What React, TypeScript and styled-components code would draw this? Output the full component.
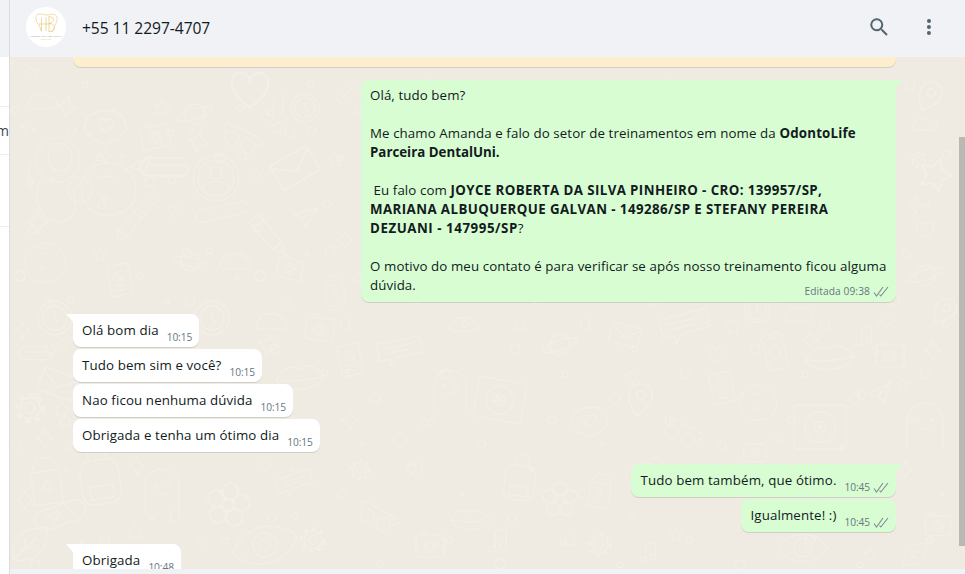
import React from "react";
import styled, { createGlobalStyle } from "styled-components";

const Global = createGlobalStyle`
  html, body { margin: 0; padding: 0; background: #fff; }
  #root { width: 965px; height: 574px; }
`;

const FONT = `"Open Sans", "Noto Sans", "Liberation Sans", sans-serif`;

const Page = styled.div`
  display: flex;
  width: 965px;
  height: 574px;
  overflow: hidden;
  font-family: ${FONT};
  color: #111b21;
`;

const LeftStrip = styled.aside`
  flex: 0 0 9px;
  display: flex;
  flex-direction: column;
  border-right: 1px solid #d8dbdf;
  overflow: hidden;
  background: #fff;
`;

const StripHead = styled.div`
  flex: 0 0 57px;
  background: #f0f2f5;
`;

const StripRow = styled.div<{ $h: number }>`
  flex: 0 0 ${(p) => p.$h}px;
  box-sizing: border-box;
  border-bottom: 1px solid #e9edef;
  display: flex;
  align-items: center;
  font-size: 14px;
  color: #3b4a54;
  white-space: nowrap;
  overflow: hidden;
`;

const ClippedWord = styled.span`
  margin-left: -4px;
  font-size: 14px;
`;

const Main = styled.main`
  flex: 1;
  display: flex;
  flex-direction: column;
  min-width: 0;
`;

const Header = styled.header`
  flex: 0 0 57px;
  box-sizing: border-box;
  display: flex;
  align-items: center;
  padding: 0 24px 3px 16px;
  background: #f0f2f5;
`;

const Avatar = styled.svg`
  flex: 0 0 40px;
  width: 40px;
  height: 40px;
`;

const Name = styled.div`
  flex: 1;
  margin: 2px 0 0 16px;
  font-size: 15.6px;
  line-height: 21px;
  letter-spacing: -0.05px;
`;

const IconBox = styled.svg<{ $size: number; $ml?: number; $mt?: number }>`
  flex: 0 0 ${(p) => p.$size}px;
  width: ${(p) => p.$size}px;
  height: ${(p) => p.$size}px;
  margin-left: ${(p) => p.$ml ?? 0}px;
  margin-top: ${(p) => p.$mt ?? 0}px;
  fill: #54656f;
`;

const ChatPane = styled.section`
  flex: 1;
  position: relative;
  overflow: hidden;
  background: #efeae2;
  min-height: 0;
`;

const Wallpaper = styled.svg`
  position: absolute;
  inset: 0;
  width: 955px;
  height: 512px;
`;

const Messages = styled.div`
  position: relative;
  display: flex;
  flex-direction: column;
  padding: 0 69px 0 63px;
`;

const Banner = styled.div`
  height: 10px;
  margin-bottom: 13px;
  border-radius: 0 0 8px 8px;
  background: #ffeecd;
  box-shadow: 0 1px 0.5px rgba(11, 20, 26, 0.13);
`;

const Bubble = styled.div<{ $out?: boolean; $tail?: boolean; $first?: boolean }>`
  position: relative;
  align-self: ${(p) => (p.$out ? "flex-end" : "flex-start")};
  display: flex;
  align-items: flex-end;
  box-sizing: border-box;
  height: 33px;
  margin-top: ${(p) => (p.$first ? 12 : 2)}px;
  padding: 7px 7px 0 9px;
  border-radius: ${(p) =>
    p.$tail ? (p.$out ? "8px 0 8px 8px" : "0 8px 8px 8px") : "8px"};
  background: ${(p) => (p.$out ? "#d9fdd3" : "#ffffff")};
  box-shadow: 0 1px 0.5px rgba(11, 20, 26, 0.13);

  &::after {
    content: "";
    display: ${(p) => (p.$tail ? "block" : "none")};
    position: absolute;
    top: 0;
    ${(p) => (p.$out ? "right: -7px;" : "left: -7px;")}
    width: 7px;
    height: 8px;
    background: ${(p) => (p.$out ? "#d9fdd3" : "#ffffff")};
    clip-path: ${(p) =>
      p.$out ? "polygon(0 0, 100% 0, 0 100%)" : "polygon(0 0, 100% 0, 100% 100%)"};
  }
`;

const LongBubble = styled.div`
  position: relative;
  align-self: flex-end;
  box-sizing: border-box;
  width: 535px;
  height: 222px;
  padding: 6px 7px 0 9px;
  border-radius: 8px 0 8px 8px;
  background: #d9fdd3;
  box-shadow: 0 1px 0.5px rgba(11, 20, 26, 0.13);

  &::after {
    content: "";
    position: absolute;
    top: 0;
    right: -7px;
    width: 7px;
    height: 8px;
    background: #d9fdd3;
    clip-path: polygon(0 0, 100% 0, 0 100%);
  }
`;

const Line = styled.div`
  height: 19px;
  font-size: 13.3px;
  line-height: 19px;
  white-space: pre;
  letter-spacing: 0.09px;
`;

const Strong = styled.b<{ $track?: number }>`
  font-weight: 700;
  letter-spacing: ${(p) => p.$track ?? 0}px;
`;

const Text = styled.span`
  font-size: 13.3px;
  line-height: 19px;
  align-self: flex-start;
  white-space: pre;
  letter-spacing: 0.12px;
`;

const Meta = styled.div<{ $corner?: boolean }>`
  display: flex;
  align-items: center;
  justify-content: flex-end;
  gap: 3px;
  font-size: 10.2px;
  line-height: 15px;
  color: #667781;
  height: 15px;
  margin: ${(p) => (p.$corner ? "-11px 0 0" : "0 0 2px 8px")};
  letter-spacing: ${(p) => (p.$corner ? 0.1 : -0.1)}px;
`;

const Ticks = styled.svg`
  flex: 0 0 16px;
  width: 16px;
  height: 11px;
  fill: none;
  stroke: #7f8c93;
  stroke-width: 1.1;
`;

const Scrollbar = styled.div`
  position: absolute;
  top: 80px;
  right: 0;
  width: 6px;
  height: 409px;
  background: #b9b9b4;
`;

const BottomBar = styled.div`
  flex: 0 0 5px;
  background: #f0f2f5;
`;

/* ---------- wallpaper drawing ---------- */

const starPath = (r: number) => {
  let d = "";
  for (let i = 0; i < 10; i++) {
    const rad = i % 2 ? r * 0.5 : r;
    const a = (Math.PI / 5) * i - Math.PI / 2;
    d += `${i ? "L" : "M"}${(Math.cos(a) * rad).toFixed(1)} ${(Math.sin(a) * rad).toFixed(1)}`;
  }
  return d + "Z";
};

const shapes: Record<string, React.ReactNode> = {
  star: <path d={starPath(10)} strokeLinejoin="round" />,
  spark: <path d="M0-11Q2-2 10 0 2 2 0 11-2 2-10 0-2-2 0-11Z" strokeLinejoin="round" />,
  heart: <path d="M0 9C-14 0-10-9-5-9-2-9 0-7 0-4 0-7 2-9 5-9 10-9 14 0 0 9Z" />,
  cloud: <path d="M-10 7a5 5 0 0 1-2-10a6 6 0 0 1 10-4a7 7 0 0 1 11 3a5.500 5.500 0 0 1 1 11z" />,
  puff: (
    <>
      <path d="M-14 8a5 5 0 0 1-3-9 6 6 0 0 1 7-8 6 6 0 0 1 10-2 6 6 0 0 1 10 2 6 6 0 0 1 6 8 5 5 0 0 1-3 9 6 6 0 0 1-8 5 6 6 0 0 1-11 0 6 6 0 0 1-8-5z" />
      <path d="M0 6C-9 0-7-5-3-5-1-5 0-4 0-2 0-4 1-5 3-5 7-5 9 0 0 6Z" />
    </>
  ),
  camera: (
    <>
      <rect x="-14" y="-10" width="28" height="22" rx="3" />
      <circle r="6" cy="1" />
      <circle r="3" cy="1" />
      <path d="M-9-10v-3h6v3" />
    </>
  ),
  planet: (
    <>
      <circle r="10" />
      <ellipse rx="18" ry="5" transform="rotate(-18)" />
    </>
  ),
  phone: (
    <>
      <rect x="-10" y="-18" width="20" height="36" rx="3" />
      <circle r="6" />
      <path d="M-6-14h12" />
    </>
  ),
  envelope: (
    <>
      <rect x="-15" y="-10" width="30" height="20" rx="2" />
      <path d="M-15-8 0 3 15-8" />
    </>
  ),
  clock: (
    <>
      <circle r="14" />
      <circle r="10" />
      <path d="M0-6V0L3 4" />
    </>
  ),
  lips: (
    <>
      <path d="M-22 0C-14-12-6-12 0-8 6-12 14-12 22 0 14 14-14 14-22 0Z" />
      <path d="M-22 0C-8 3 8 3 22 0" />
    </>
  ),
  chat: (
    <>
      <path d="M-22-10h44v17H-4l-8 7V7h-10z" strokeLinejoin="round" />
      <path d="M-15-4H15M-15 1H8" />
    </>
  ),
  ghost: (
    <>
      <path d="M-18 24V-4A18 18 0 0 1 18-4V24" />
      <path d="M-6 2Q0 7 6 2" />
      <circle cx="-7" cy="-5" r="1.500" />
      <circle cx="7" cy="-5" r="1.500" />
    </>
  ),
  flower: (
    <>
      <circle r="4" />
      <circle cy="-9" r="5.500" />
      <circle cx="8.500" cy="-3" r="5.500" />
      <circle cx="5.500" cy="7.500" r="5.500" />
      <circle cx="-5.500" cy="7.500" r="5.500" />
      <circle cx="-8.500" cy="-3" r="5.500" />
    </>
  ),
  gear: (
    <>
      <circle r="4" />
      <circle r="8" />
      <circle r="10.500" strokeDasharray="4 4" strokeWidth="2.500" />
    </>
  ),
  glasses: (
    <>
      <circle cx="-9" r="7" />
      <circle cx="9" r="7" />
      <path d="M-16-2-22-10M16-2 22-10M-20-12H20" />
    </>
  ),
  pencil: <path d="M-5-18H5V12L0 20-5 12ZM-5 12H5M-5-12H5" strokeLinejoin="round" />,
  carton: (
    <>
      <path d="M-13-8-6-20H6L13-8V22H-13ZM-13-8H13" strokeLinejoin="round" />
      <path d="M0 0C4 6 5 10 0 10-5 10-4 6 0 0Z" />
    </>
  ),
  bag: (
    <>
      <rect x="-15" y="-14" width="30" height="34" rx="9" />
      <path d="M-7-14v-5a7 7 0 0 1 14 0v5M-9 6H9V16H-9Z" />
    </>
  ),
  astro: (
    <>
      <circle r="22" />
      <ellipse rx="12" ry="14" cx="2" cy="-3" />
      <path d="M-6-6Q-4-12 1-14" />
      <path d="M-22 0C-34 8-30 30-22 36M-18 22C-26 40-18 60 0 62 20 60 20 44 14 28" />
      <circle cx="22" cy="30" r="12" />
      <circle cx="22" cy="30" r="5" strokeDasharray="1.500 2.500" />
    </>
  ),
  person: (
    <>
      <circle r="23" />
      <circle r="18" />
      <circle cy="-5" r="6" />
      <path d="M-14 11C-9 1 9 1 14 11" />
    </>
  ),
  blob: (
    <>
      <path d="M-22 2C-24-14-8-24 6-20 20-16 26-4 22 10 18 22-2 26-12 20-18 16-22 10-22 2Z" strokeDasharray="9 1" />
      <circle cx="-3" cy="8" r="2" />
      <path d="M-8-8Q0-12 6-8" />
    </>
  ),
  band: (
    <>
      <rect x="-27" y="-6" width="54" height="12" rx="6" />
      <path d="M-12 0h1M-5 0h1M2 0h1M9 0h1" />
    </>
  ),
  plane: <path d="M-11 2 11-10 4 11-2 4Z M-2 4 11-10" strokeLinejoin="round" />,
  bread: (
    <>
      <rect x="-24" y="-9" width="48" height="18" rx="9" />
      <path d="M-12-6-7 6M-2-6 3 6M8-6 13 6" />
    </>
  ),
  record: (
    <>
      <rect x="-24" y="-20" width="48" height="40" rx="4" />
      <circle r="14" />
      <circle r="5" />
      <circle r="1.500" />
    </>
  ),
  eye: (
    <>
      <path d="M-28 0C-14-20 14-20 28 0 14 20-14 20-28 0Z" />
      <circle r="10" />
      <circle r="5" strokeDasharray="2 2" />
    </>
  ),
  leaf: (
    <>
      <path d="M-14 12C-16-8-2-16 14-14 16 2 6 16-14 12Z" />
      <path d="M-14 12 6-6M-4 3V-5M-4 3H4" />
    </>
  ),
  note: <path d="M-5 9V-8L6-11V6M-5 9a3 3 0 1 1-3-3h3zM6 6a3 3 0 1 1-3-3h3z" />,
  tag: (
    <>
      <path d="M0 13C-12 2-10-10 0-10S12 2 0 13Z" />
      <circle cy="-2" r="3" />
    </>
  ),
  clip: <path d="M-10 10 8-8a4 4 0 0 1 6 6L-4 16a7 7 0 0 1-10-10L4-12" />,
  quote: <path d="M-8-6a4 4 0 1 1-1 7q0 4-3 6M6-6a4 4 0 1 1-1 7q0 4-3 6" />,
  card: (
    <>
      <rect x="-12" y="-17" width="24" height="34" rx="3" transform="rotate(-12)" />
      <circle r="5" cy="-5" />
      <path d="M-6 6H6M-5 11H5" />
    </>
  ),
};

type Doodle = [string, number, number, number?, number?];

const doodles: Doodle[] = [
  ["star", 31, 73, 0.75, -10], ["cloud", 43, 102, 0.95, 0], ["spark", 28, 128, 0.8, 15],
  ["puff", 106, 125, 1.15, 0], ["spark", 67, 107, 1, 10], ["star", 162, 108, 0.8, 8],
  ["planet", 195, 114, 1, 0], ["camera", 155, 136, 1, -12], ["spark", 198, 142, 1, 10],
  ["glasses", 240, 142, 1, 25], ["heart", 250, 90, 1.9, 0], ["tag", 268, 115, 0.7, -10],
  ["star", 278, 128, 0.7, 10], ["clock", 305, 108, 1, 0], ["note", 278, 105, 0.9, 0],
  ["astro", 58, 160, 1, 0], ["blob", 108, 188, 1.2, 0], ["plane", 140, 165, 1, 0],
  ["clip", 168, 165, 1.3, 45], ["person", 216, 178, 1, 0], ["envelope", 295, 168, 1.4, -30],
  ["star", 256, 175, 0.6, 8], ["spark", 105, 155, 0.7, 0], ["pencil", 130, 225, 1, 40],
  ["band", 222, 212, 1, -12], ["quote", 150, 201, 0.8, 0], ["heart", 175, 212, 0.7, 0],
  ["spark", 38, 222, 1.1, 0], ["pencil", 268, 235, 1.2, -40], ["plane", 305, 215, 1, 15],
  ["blob", 45, 262, 0.9, 0], ["star", 100, 255, 0.7, 0], ["planet", 190, 262, 0.9, 30],
  ["camera", 290, 268, 0.9, 12], ["card", 120, 280, 0.9, 0], ["cloud", 236, 262, 1, 0],
  ["clock", 55, 318, 1.2, 0], ["clip", 38, 352, 0.9, 45], ["spark", 22, 330, 0.8, 0],
  ["star", 62, 345, 0.7, 0], ["envelope", 58, 384, 1.2, 20], ["gear", 30, 408, 1.3, 0],
  ["star", 62, 410, 0.8, 10], ["spark", 45, 438, 0.9, 0], ["star", 68, 445, 0.6, 0],
  ["carton", 46, 480, 1.1, -8], ["bag", 100, 478, 1.3, -8], ["spark", 25, 500, 0.9, 0],
  ["bread", 60, 515, 1.1, -20], ["leaf", 30, 545, 1.2, 0], ["star", 135, 532, 0.8, 0],
  ["ghost", 162, 490, 0.95, 0], ["flower", 228, 505, 1.5, 10], ["spark", 137, 466, 0.8, 0],
  ["eye", 265, 545, 1.2, -15], ["gear", 313, 540, 1.1, 0], ["chat", 295, 482, 0.8, -20],
  ["heart", 265, 466, 0.7, 0], ["clock", 212, 318, 1.2, 0], ["cloud", 272, 322, 1, 0],
  ["camera", 320, 328, 1, 8], ["spark", 268, 345, 1, 15], ["lips", 300, 378, 1.1, -5],
  ["clip", 225, 375, 0.9, 30], ["star", 190, 355, 0.6, 10], ["gear", 360, 470, 0.9, 0],
  ["spark", 350, 420, 0.9, 0], ["glasses", 375, 520, 1, 30], ["camera", 430, 545, 1, 0],
  ["heart", 415, 470, 0.8, 0], ["chat", 400, 350, 1, -12], ["note", 500, 540, 1, 0],
  ["card", 350, 360, 0.9, 0], ["phone", 775, 352, 1, -15], ["heart", 716, 355, 0.8, 0],
  ["chat", 685, 325, 1.1, -15], ["star", 733, 327, 0.8, 0], ["clock", 757, 310, 0.9, 0],
  ["cloud", 800, 315, 0.9, 0], ["lips", 830, 358, 1.1, -5], ["spark", 810, 340, 0.8, 0],
  ["note", 866, 335, 0.9, 0], ["camera", 890, 355, 1, 0], ["quote", 885, 322, 0.8, 0],
  ["spark", 933, 350, 0.9, 0], ["star", 903, 385, 0.7, 0], ["tag", 945, 310, 1.2, 40],
  ["card", 722, 388, 0.9, 0], ["blob", 758, 402, 0.8, 0], ["star", 630, 378, 0.7, 0],
  ["record", 820, 427, 1.1, 0], ["plane", 880, 392, 1, 0], ["ghost", 925, 425, 1, 0],
  ["glasses", 680, 436, 1, 28], ["camera", 755, 452, 0.8, 0], ["star", 778, 438, 0.6, 0],
  ["bread", 645, 470, 0.8, -25], ["spark", 905, 470, 0.8, 0], ["tag", 640, 398, 1.4, 10],
  ["camera", 938, 525, 0.9, 0], ["star", 676, 535, 0.7, 0], ["eye", 803, 548, 0.9, 0],
  ["star", 870, 555, 0.7, 0], ["leaf", 915, 555, 0.8, 0], ["note", 650, 552, 0.9, 0],
  ["gear", 600, 545, 1, 0], ["flower", 560, 500, 1.2, 0], ["bag", 520, 480, 1, 8],
  ["puff", 590, 420, 1, 0], ["record", 500, 400, 1, 10], ["ghost", 450, 390, 0.9, 0],
  ["planet", 560, 345, 1, 0], ["envelope", 625, 335, 1, 15], ["star", 520, 325, 0.7, 0],
  ["cloud", 465, 325, 0.9, 0], ["spark", 400, 440, 0.8, 0], ["lips", 470, 520, 0.9, 0],
  ["carton", 600, 490, 0.8, 10], ["tag", 930, 95, 1.3, 30], ["star", 935, 175, 1.7, 20],
  ["cloud", 925, 125, 0.8, 0], ["heart", 925, 230, 0.9, 0], ["planet", 925, 275, 1, 0],
  ["spark", 915, 205, 0.8, 0], ["gear", 918, 160, 0.7, 0], ["clip", 350, 90, 0.8, 0],
  ["star", 335, 160, 0.7, 0], ["spark", 345, 240, 0.8, 0], ["carton", 335, 290, 0.7, 0],
];

const dots: [number, number, number][] = Array.from({ length: 190 }, (_, i) => {
  const x = 12 + ((i * 137.5) % 945);
  const y = 62 + ((i * 89.3 + (i % 7) * 31) % 505);
  return [Math.round(x), Math.round(y), 2 + ((i * 3) % 4)];
});

function WallpaperArt() {
  return (
    <Wallpaper viewBox="10 57 955 512" fill="none" stroke="#f3efe8" strokeWidth="1.200" aria-hidden>
      {doodles.map(([kind, x, y, s = 1, r = 0], i) => (
        <g key={i} transform={`translate(${x} ${y}) rotate(${r}) scale(${s})`}>
          {shapes[kind]}
        </g>
      ))}
      {dots.map(([x, y, r], i) => (
        <circle key={i} cx={x} cy={y} r={r} />
      ))}
    </Wallpaper>
  );
}

function Logo() {
  return (
    <Avatar viewBox="0 0 40 40" aria-hidden>
      <circle cx="20" cy="20" r="20" fill="#fff" />
      <path
        d="M10 12C9 8 12 7 15 7 18 7 20 8.500 22 8 25 7 30 6.500 31 10 32 14 29 17 28 21 27.500 24 26 26 25 24"
        fill="none"
        stroke="#eed48e"
        strokeWidth="0.8"
      />
      <path
        d="M10 12C10 15 12 17 13 18 15 21 14 24 16 24.500"
        fill="none"
        stroke="#eed48e"
        strokeWidth="0.8"
      />
      <path
        d="M15.500 11V24M20 10V24M13 17H24M23 9V25M23 10C29 9 29 16 23 16.500 30 16 30 24.500 23 24.500"
        fill="none"
        stroke="#e6c578"
        strokeWidth="0.7"
      />
      <text
        x="20"
        y="29.800"
        textAnchor="middle"
        fontFamily="Liberation Serif, serif"
        fontSize="2.700"
        fill="#7c7c7c"
      >
        HONORATO E BRANDÃO
      </text>
      <text
        x="20"
        y="32.800"
        textAnchor="middle"
        fontFamily="Liberation Sans, sans-serif"
        fontSize="2.400"
        fill="#e6d48c"
      >
        ODONTO
      </text>
    </Avatar>
  );
}

function DoubleTick() {
  return (
    <Ticks viewBox="0 0 16 11" aria-hidden>
      <path d="M1 6.500 3.500 10 10 1" />
      <path d="M6.500 8.500 7.800 10 15 1" />
    </Ticks>
  );
}

type Msg = { text: string; time: string };

const block1: Msg[] = [
  { text: "Olá bom dia", time: "10:15" },
  { text: "Tudo bem sim e você?", time: "10:15" },
  { text: "Nao ficou nenhuma dúvida", time: "10:15" },
  { text: "Obrigada e tenha um ótimo dia", time: "10:15" },
];

const block2: Msg[] = [
  { text: "Tudo bem também, que ótimo.", time: "10:45" },
  { text: "Igualmente! :)", time: "10:45" },
];

export default function App() {
  return (
    <Page>
      <Global />
      <LeftStrip>
        <StripHead />
        <StripRow $h={50} />
        <StripRow $h={48}>
          <ClippedWord>m</ClippedWord>
        </StripRow>
        <StripRow $h={72} />
      </LeftStrip>
      <Main>
        <Header>
          <Logo />
          <Name>+55 11 2297-4707</Name>
          <IconBox $size={30} viewBox="0 0 24 24" aria-hidden>
            <path d="M15.009 13.805h-.636l-.22-.219a5.184 5.184 0 0 0 1.256-3.386 5.207 5.207 0 1 0-5.207 5.208 5.183 5.183 0 0 0 3.385-1.255l.221.22v.635l4.004 3.999 1.194-1.195-3.997-4.007zm-4.808 0a3.605 3.605 0 1 1 0-7.21 3.605 3.605 0 0 1 0 7.21z" />
          </IconBox>
          <IconBox $size={24} $ml={23} $mt={2} viewBox="0 0 24 24" aria-hidden>
            <path d="M12 7a2 2 0 1 0-.001-4.001A2 2 0 0 0 12 7zm0 2a2 2 0 1 0-.001 3.999A2 2 0 0 0 12 9zm0 6a2 2 0 1 0-.001 3.999A2 2 0 0 0 12 15z" />
          </IconBox>
        </Header>
        <ChatPane>
          <WallpaperArt />
          <Messages>
            <Banner />
            <LongBubble>
              <Line>Olá, tudo bem?</Line>
              <Line />
              <Line>
                Me chamo Amanda e falo do setor de treinamentos em nome da <Strong $track={0.2}>OdontoLife</Strong>
              </Line>
              <Line>
                <Strong>Parceira DentalUni.</Strong>
              </Line>
              <Line />
              <Line>
                {" "}Eu falo com <Strong $track={0.4}>JOYCE ROBERTA DA SILVA PINHEIRO - CRO: 139957/SP,</Strong>
              </Line>
              <Line>
                <Strong $track={0.42}>MARIANA ALBUQUERQUE GALVAN - 149286/SP E STEFANY PEREIRA</Strong>
              </Line>
              <Line>
                <Strong $track={0.55}>DEZUANI - 147995/SP</Strong>?
              </Line>
              <Line />
              <Line>O motivo do meu contato é para verificar se após nosso treinamento ficou alguma</Line>
              <Line>dúvida.</Line>
              <Meta $corner>
                <span>Editada 09:38</span>
                <DoubleTick />
              </Meta>
            </LongBubble>
            {block1.map((m, i) => (
              <Bubble key={m.text} $first={i === 0} $tail={i === 0}>
                <Text>{m.text}</Text>
                <Meta>{m.time}</Meta>
              </Bubble>
            ))}
            {block2.map((m, i) => (
              <Bubble key={m.text} $out $first={i === 0} $tail={i === 0}>
                <Text>{m.text}</Text>
                <Meta>
                  <span>{m.time}</span>
                  <DoubleTick />
                </Meta>
              </Bubble>
            ))}
            <Bubble $first $tail>
              <Text>Obrigada</Text>
              <Meta>10:48</Meta>
            </Bubble>
          </Messages>
          <Scrollbar />
        </ChatPane>
        <BottomBar />
      </Main>
    </Page>
  );
}
